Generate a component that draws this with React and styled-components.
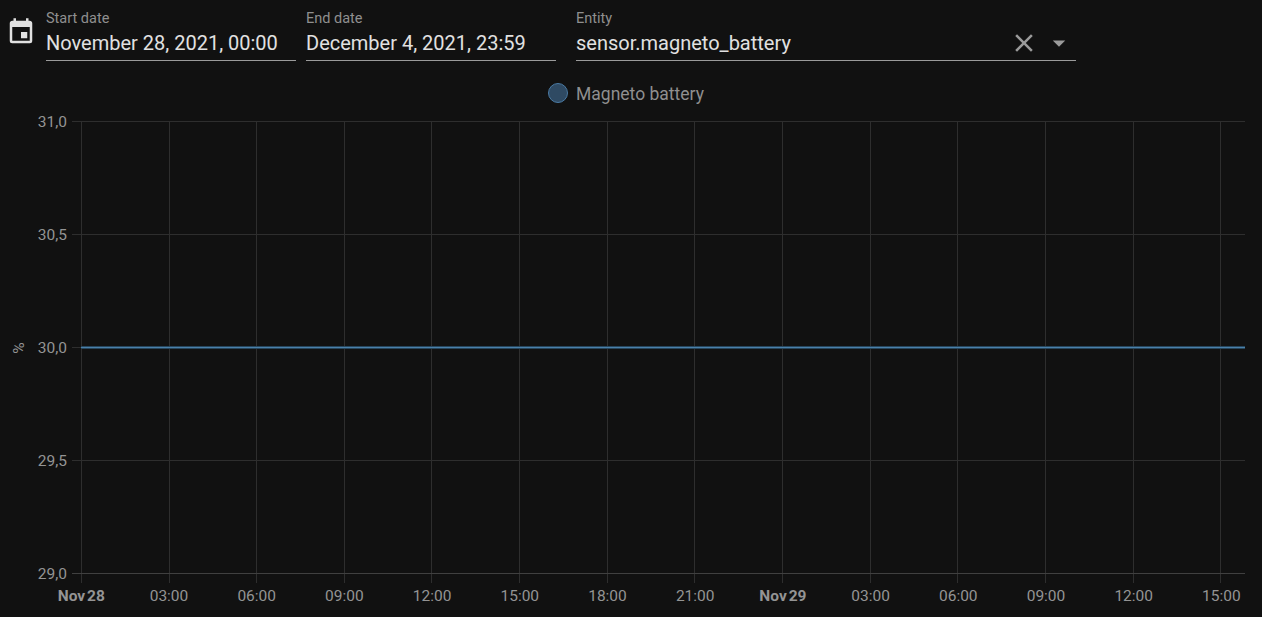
import React from "react";
import styled, { createGlobalStyle } from "styled-components";

const GlobalStyle = createGlobalStyle`
  html, body {
    margin: 0;
    background: #111111;
    overflow: hidden;
  }
  body {
    font-family: Roboto, "Liberation Sans", sans-serif;
  }
`;

const Page = styled.div`
  width: 1262px;
  height: 617px;
  background: #111111;
  display: flex;
  flex-direction: column;
`;

const Toolbar = styled.div`
  display: flex;
  align-items: flex-start;
  height: 61px;
  padding-left: 6px;
  flex: none;
`;

const IconSlot = styled.div`
  width: 30px;
  height: 30px;
  margin-top: 17px;
  margin-right: 10px;
  color: #e1e1e1;
`;

const Field = styled.div`
  width: ${(p) => p.width}px;
  height: 61px;
  margin-right: ${(p) => p.gap || 0}px;
  box-sizing: border-box;
  border-bottom: 1px solid #9b9b9b;
  position: relative;
  flex: none;
`;

const Label = styled.div`
  font-size: 14.5px;
  line-height: 14px;
  padding-top: 12px;
  color: #8f8f8f;
`;

const Value = styled.div`
  font-size: 20px;
  line-height: 24px;
  margin-top: 5px;
  color: #e1e1e1;
`;

const FieldIcons = styled.div`
  position: absolute;
  right: 2px;
  top: 28px;
  display: flex;
  align-items: center;
  gap: 5px;
  color: #9b9b9b;
`;

const Legend = styled.div`
  display: flex;
  justify-content: center;
  align-items: center;
  gap: 8px;
  height: 22px;
  margin-top: 21px;
  padding-right: 10px;
  flex: none;
  font-size: 17.5px;
  color: #8f8f8f;
`;

const LegendLabel = styled.span`
  position: relative;
  top: 1px;
`;

const LegendDot = styled.span`
  width: 20px;
  height: 20px;
  box-sizing: border-box;
  border-radius: 50%;
  background: #2f4a63;
  border: 1.5px solid #4a7aa3;
`;

const ChartSvg = styled.svg`
  display: block;
  flex: none;
`;

const GRID = "#2e2e2e";
const AXIS = "#404040";
const TICK = "#949494";

const xTicks = [
  { x: 81.5, label: "Nov 28", major: true },
  { x: 169.5, label: "03:00" },
  { x: 256.5, label: "06:00" },
  { x: 344.5, label: "09:00" },
  { x: 431.5, label: "12:00" },
  { x: 519.5, label: "15:00" },
  { x: 607.5, label: "18:00" },
  { x: 694.5, label: "21:00" },
  { x: 782.5, label: "Nov 29", major: true },
  { x: 870.5, label: "03:00" },
  { x: 957.5, label: "06:00" },
  { x: 1045.5, label: "09:00" },
  { x: 1133.5, label: "12:00" },
  { x: 1220.5, label: "15:00" },
];

const yTicks = [
  { y: 121.5, label: "31,0" },
  { y: 234.5, label: "30,5" },
  { y: 347.5, label: "30,0" },
  { y: 460.5, label: "29,5" },
  { y: 573.5, label: "29,0" },
];

// svg sits below the toolbar and legend, so shift the page coordinates up
const TOP = 104;

function Chart() {
  return (
    <ChartSvg width="1262" height="513" viewBox={`0 ${TOP} 1262 513`}>
      {xTicks.map((t) => (
        <line key={t.x} x1={t.x} x2={t.x} y1="121" y2="583" stroke={GRID} />
      ))}
      {yTicks.map((t) => (
        <line
          key={t.y}
          x1="72"
          x2="1245"
          y1={t.y}
          y2={t.y}
          stroke={t.y === 573.5 ? AXIS : GRID}
        />
      ))}
      <line x1="81" x2="1245" y1="347.5" y2="347.5" stroke="#27465c" strokeWidth="3" />
      <line x1="81" x2="1245" y1="347.5" y2="347.5" stroke="#4a80aa" strokeWidth="1" />
      {yTicks.map((t) => (
        <text
          key={t.label}
          x="67"
          y={t.y + 5}
          textAnchor="end"
          fontSize="15.5"
          fontFamily="Roboto, sans-serif"
          fill={TICK}
        >
          {t.label}
        </text>
      ))}
      {xTicks.map((t, i) => (
        <text
          key={t.x}
          x={81.3 + 87.7 * i}
          y="601"
          textAnchor="middle"
          fontSize="15.5"
          fontWeight={t.major ? 700 : 400}
          wordSpacing={t.major ? -2 : 0}
          fontFamily="Roboto, sans-serif"
          fill={TICK}
        >
          {t.label}
        </text>
      ))}
      <text
        x="0"
        y="0"
        transform="translate(24 348) rotate(-90)"
        textAnchor="middle"
        fontSize="15.5"
        fontFamily="Roboto, sans-serif"
        fill={TICK}
      >
        %
      </text>
    </ChartSvg>
  );
}

export default function App() {
  return (
    <Page>
      <GlobalStyle />
      <Toolbar>
        <IconSlot>
          <svg width="30" height="30" viewBox="0 0 24 24" fill="currentColor">
            <path d="M19,19H5V8H19M16,1V3H8V1H6V3H5C3.89,3 3,3.89 3,5V19A2,2 0 0,0 5,21H19A2,2 0 0,0 21,19V5C21,3.89 20.1,3 19,3H18V1M17,12H12V17H17V12Z" />
          </svg>
        </IconSlot>
        <Field width={250} gap={10}>
          <Label>Start date</Label>
          <Value>November 28, 2021, 00:00</Value>
        </Field>
        <Field width={250} gap={20}>
          <Label>End date</Label>
          <Value>December 4, 2021, 23:59</Value>
        </Field>
        <Field width={500}>
          <Label>Entity</Label>
          <Value>sensor.magneto_battery</Value>
          <FieldIcons>
            <svg width="30" height="30" viewBox="0 0 24 24" fill="currentColor">
              <path d="M19,6.41L17.59,5L12,10.59L6.41,5L5,6.41L10.59,12L5,17.59L6.41,19L12,13.41L17.59,19L19,17.59L13.41,12L19,6.41Z" />
            </svg>
            <svg width="30" height="30" viewBox="0 0 24 24" fill="currentColor">
              <path d="M7,10L12,15L17,10H7Z" />
            </svg>
          </FieldIcons>
        </Field>
      </Toolbar>
      <Legend>
        <LegendDot />
        <LegendLabel>Magneto battery</LegendLabel>
      </Legend>
      <Chart />
    </Page>
  );
}
